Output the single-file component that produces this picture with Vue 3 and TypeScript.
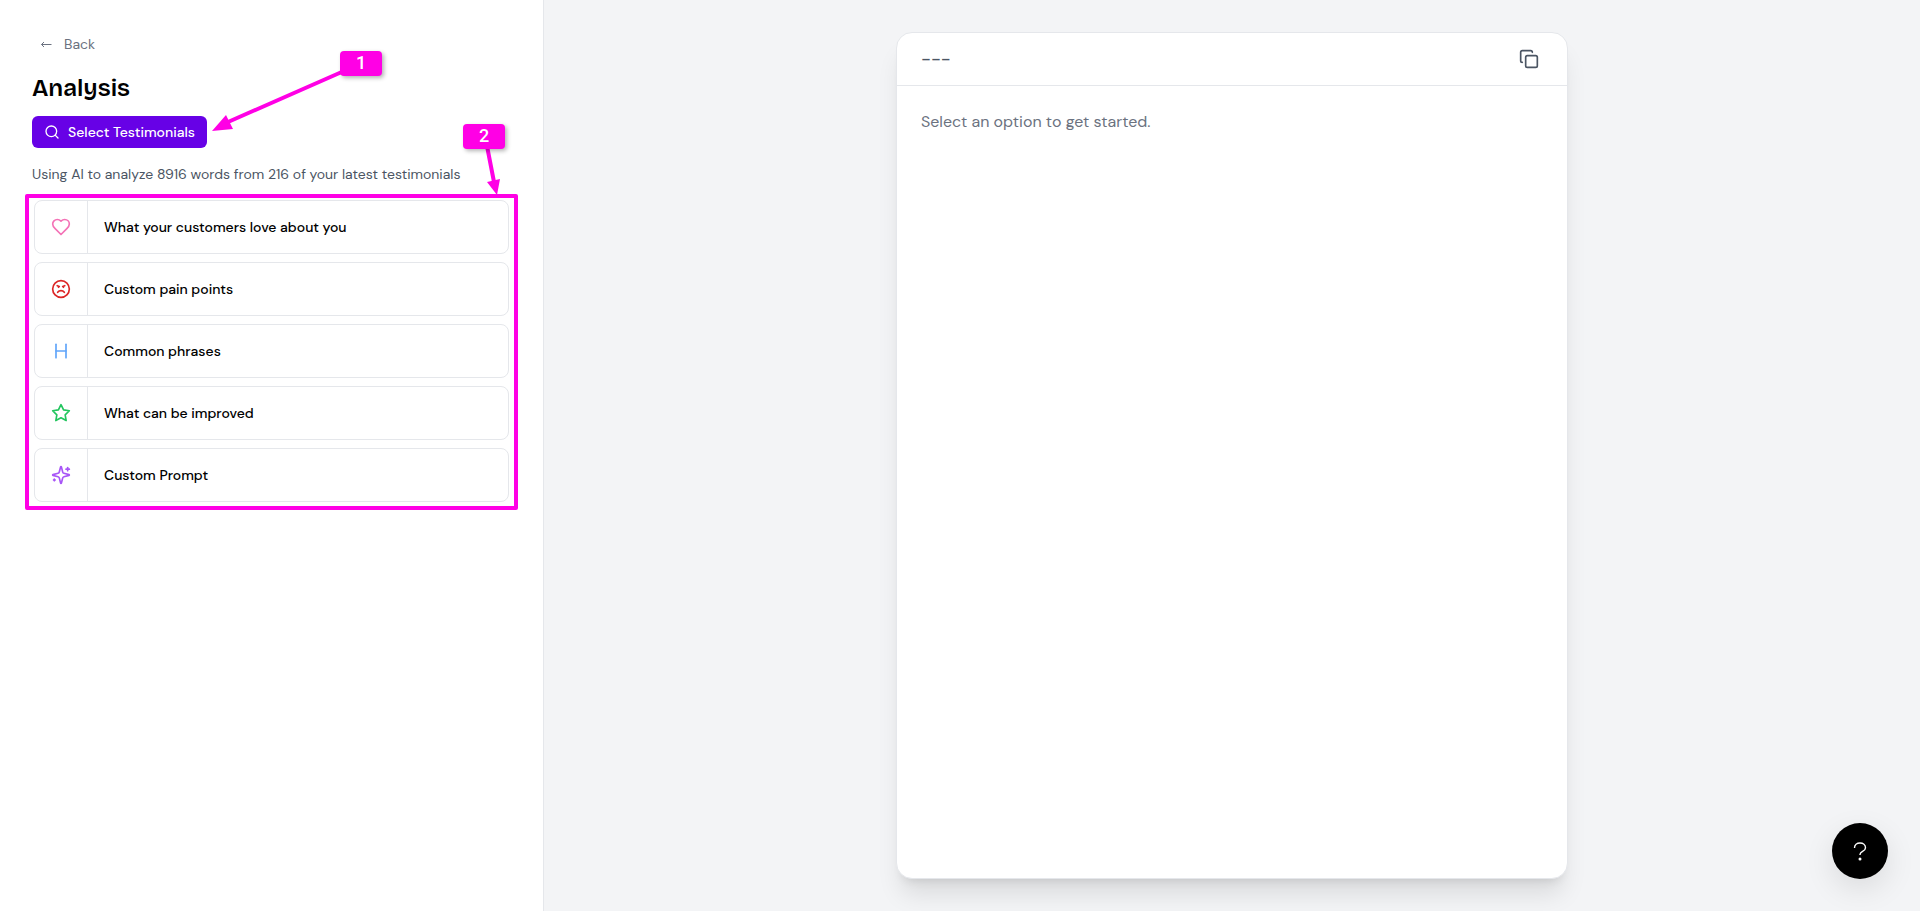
<script setup lang="ts">
interface Shape {
  d: string
}
interface Option {
  label: string
  tone: string
  shapes: Shape[]
}

const options: Option[] = [
  {
    label: 'What your customers love about you',
    tone: 'pink',
    shapes: [
      { d: 'M19 14c1.49-1.46 3-3.21 3-5.5A5.5 5.5 0 0 0 16.5 3c-1.76 0-3 .5-4.5 2-1.5-1.5-2.74-2-4.5-2A5.5 5.5 0 0 0 2 8.5c0 2.3 1.5 4.05 3 5.5l7 7Z' },
    ],
  },
  {
    label: 'Custom pain points',
    tone: 'red',
    shapes: [
      { d: 'M2 12a10 10 0 1 0 20 0a10 10 0 1 0-20 0' },
      { d: 'M16 16s-1.5-2-4-2-4 2-4 2' },
      { d: 'M7.5 8 10 9' },
      { d: 'm14 9 2.5-1' },
      { d: 'M9 10h.01' },
      { d: 'M15 10h.01' },
    ],
  },
  {
    label: 'Common phrases',
    tone: 'blue',
    shapes: [{ d: 'M6 12h12' }, { d: 'M6 20V4' }, { d: 'M18 20V4' }],
  },
  {
    label: 'What can be improved',
    tone: 'green',
    shapes: [
      { d: 'M12 2l3.09 6.26L22 9.27l-5 4.87 1.18 6.88L12 17.77l-6.18 3.25L7 14.14 2 9.27l6.91-1.01z' },
    ],
  },
  {
    label: 'Custom Prompt',
    tone: 'purple',
    shapes: [
      { d: 'M9.937 15.5A2 2 0 0 0 8.5 14.063l-6.135-1.582a.5.5 0 0 1 0-.962L8.5 9.936A2 2 0 0 0 9.937 8.5l1.582-6.135a.5.5 0 0 1 .963 0L14.063 8.5A2 2 0 0 0 15.5 9.937l6.135 1.581a.5.5 0 0 1 0 .964L15.5 14.063a2 2 0 0 0-1.437 1.437l-1.582 6.135a.5.5 0 0 1-.963 0z' },
      { d: 'M20 3v4' },
      { d: 'M22 5h-4' },
      { d: 'M4 17v2' },
      { d: 'M5 18H3' },
    ],
  },
]
</script>

<template>
  <div class="page">
    <aside class="sidebar">
      <a class="back" href="#">
        <svg class="back-arrow" viewBox="0 0 12 12" aria-hidden="true">
          <path d="M11.500 6.500H1.500M4 4 1.500 6.500 4 9" />
        </svg>
        <span>Back</span>
      </a>
      <h1 class="title">Analysis</h1>
      <button class="select-button" type="button">
        <svg class="icon small" viewBox="0 0 24 24" aria-hidden="true">
          <circle cx="11" cy="11" r="8" />
          <path d="m21 21-4.3-4.3" />
        </svg>
        <span>Select Testimonials</span>
      </button>
      <p class="summary">Using AI to analyze 8916 words from 216 of your latest testimonials</p>
      <div class="options">
        <button v-for="option in options" :key="option.label" class="option" type="button">
          <span class="option-icon" :class="option.tone">
            <svg class="icon" viewBox="0 0 24 24" aria-hidden="true">
              <path v-for="shape in option.shapes" :key="shape.d" :d="shape.d" />
            </svg>
          </span>
          <span class="option-label">{{ option.label }}</span>
        </button>
        <div class="highlight"></div>
      </div>
      <svg class="arrows" viewBox="0 0 544 220" aria-hidden="true">
        <path class="shaft" d="M344 71 228 122M487 146 494 182" />
        <path class="head" d="M212 131 226 115 233 129zM497 195 487 182 500 179z" />
      </svg>
      <span class="marker first">1</span>
      <span class="marker second">2</span>
    </aside>

    <main class="main">
      <section class="card">
        <header class="card-header">
          <h2 class="card-title">---</h2>
          <button class="copy" type="button" aria-label="Copy">
            <svg class="icon" viewBox="0 0 24 24" aria-hidden="true">
              <rect x="8" y="8" width="14" height="14" rx="2" />
              <path d="M4 16c-1.1 0-2-.9-2-2V4c0-1.1.9-2 2-2h10c1.1 0 2 .9 2 2" />
            </svg>
          </button>
        </header>
        <p class="card-body">Select an option to get started.</p>
      </section>
    </main>

    <button class="help" type="button" aria-label="Help">
      <svg class="help-icon" viewBox="0 0 24 24" aria-hidden="true">
        <path d="M6.5 9C6.500 5.800 9 4 12 4s5.500 1.800 5.500 4.700c0 4.100-5.500 3.300-5.500 6.800v.5" />
        <circle cx="12" cy="20" r="1.500" />
      </svg>
    </button>
  </div>
</template>

<style>
body {
  margin: 0;
}
</style>

<style scoped>
.page {
  display: flex;
  min-height: 100vh;
  background: #f3f4f6;
  color: #000;
  font-family: "DM Sans", Inter, "Liberation Sans", sans-serif;
  font-size: 14px;
  line-height: 20px;
}
button {
  font: inherit;
  cursor: pointer;
}
.sidebar {
  position: relative;
  box-sizing: border-box;
  flex: 0 0 34rem;
  display: flex;
  flex-direction: column;
  align-items: flex-start;
  padding: 32px;
  background: #fff;
  border-right: 1px solid #e5e7eb;
}
.back {
  display: flex;
  align-items: center;
  gap: 12px;
  padding: 2px 8px;
  color: #6b7280;
  text-decoration: none;
}
.back-arrow {
  width: 12px;
  height: 12px;
  fill: none;
  stroke: currentColor;
}
.title {
  margin: 16px 0 12px;
  font-family: "Bricolage Grotesque", "DM Sans", Inter, sans-serif;
  font-size: 24px;
  line-height: 32px;
  font-weight: 600;
}
.select-button {
  display: flex;
  align-items: center;
  gap: 8px;
  height: 32px;
  padding: 0 12px;
  border: 0;
  border-radius: 6px;
  background: #6701e6;
  color: #fff;
  font-weight: 500;
}
.summary {
  margin: 16px 0;
  color: #4b5563;
}
.icon {
  display: block;
  width: 20px;
  height: 20px;
  fill: none;
  stroke: currentColor;
  stroke-width: 2;
  stroke-linecap: round;
  stroke-linejoin: round;
}
.icon.small {
  width: 16px;
  height: 16px;
}
.options {
  position: relative;
  align-self: stretch;
  display: flex;
  flex-direction: column;
  gap: 8px;
  margin: 0 2px;
}
.option {
  display: flex;
  align-items: stretch;
  height: 54px;
  padding: 0;
  border: 1px solid #e5e7eb;
  border-radius: 8px;
  background: #fff;
  color: #000;
  font-weight: 500;
  text-align: left;
}
.option-icon {
  display: flex;
  align-items: center;
  justify-content: center;
  width: 52px;
  border-right: 1px solid #e5e7eb;
}
.option-label {
  align-self: center;
  padding: 0 16px;
}
.pink { color: #f472b6; }
.red { color: #dc2626; }
.blue { color: #60a5fa; }
.green { color: #22c55e; }
.purple { color: #a855f7; }
.highlight {
  position: absolute;
  inset: -6px -9px -8px;
  border: 4px solid #ff00e5;
  border-radius: 2px;
  pointer-events: none;
}
.arrows {
  position: absolute;
  top: 0;
  left: 0;
  width: 544px;
  height: 220px;
  pointer-events: none;
}
.shaft {
  fill: none;
  stroke: #ff00e5;
  stroke-width: 4;
}
.head {
  fill: #ff00e5;
}
.marker {
  position: absolute;
  width: 42px;
  height: 25px;
  border-radius: 4px;
  background: #ff00e5;
  box-shadow: 2px 2px 4px rgb(0 0 0 / 30%);
  color: #fff;
  font-family: Roboto, sans-serif;
  font-size: 18px;
  line-height: 24px;
  font-weight: 500;
  text-align: center;
}
.first {
  top: 51px;
  left: 340px;
}
.second {
  top: 124px;
  left: 463px;
}
.main {
  flex: 1;
  display: flex;
  justify-content: center;
  padding: 32px;
}
.card {
  box-sizing: border-box;
  width: 100%;
  max-width: 672px;
  border: 1px solid #e5e7eb;
  border-radius: 16px;
  background: #fff;
  box-shadow: 0 20px 25px -5px rgb(0 0 0 / 10%), 0 8px 10px -6px rgb(0 0 0 / 10%);
}
.card-header {
  display: flex;
  align-items: center;
  justify-content: space-between;
  height: 52px;
  padding: 0 24px;
  border-bottom: 1px solid #e5e7eb;
}
.card-title {
  margin: 0;
  color: #4b5563;
  font-size: 18px;
  line-height: 28px;
  font-weight: 500;
}
.copy {
  padding: 4px;
  border: 0;
  background: none;
  color: #4b5563;
}
.card-body {
  margin: 24px;
  color: #6b7280;
  font-size: 16px;
  line-height: 24px;
}
.help {
  position: fixed;
  right: 32px;
  bottom: 32px;
  display: grid;
  place-items: center;
  width: 56px;
  height: 56px;
  padding: 0;
  border: 0;
  border-radius: 50%;
  background: #000;
  color: #fff;
  box-shadow: 0 10px 30px rgb(0 0 0 / 10%);
}
.help-icon {
  width: 24px;
  height: 24px;
  fill: none;
  stroke: currentColor;
  stroke-width: 1.4;
}
.help-icon circle {
  fill: currentColor;
  stroke: none;
}
</style>
